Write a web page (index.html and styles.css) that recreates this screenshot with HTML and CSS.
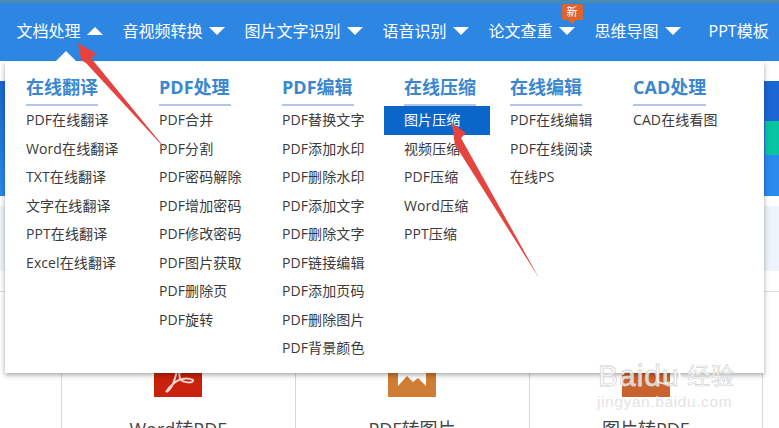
FILE: index.html
```html
<!DOCTYPE html>
<html>
<head>
    <meta charset="utf-8">
    <title>在线转换工具</title>
    <link rel="stylesheet" href="styles.css">
</head>
<body>
<div class="page">
    <div class="topStrip"></div>
    <ul class="nav">
        <li class="navItem">文档处理<i class="caret caretUp"></i></li>
        <li class="navItem">音视频转换<i class="caret"></i></li>
        <li class="navItem">图片文字识别<i class="caret"></i></li>
        <li class="navItem">语音识别<i class="caret"></i></li>
        <li class="navItem navNew">论文查重<i class="caret"></i><span class="newTag">新</span></li>
        <li class="navItem">思维导图<i class="caret"></i></li>
        <li class="navItem navLast">PPT模板</li>
    </ul>

    <div class="banner">
        <div class="bandBlue"></div>
        <div class="bandStack">
            <div class="band1"></div>
            <div class="band2"></div>
            <div class="band3"></div>
        </div>
    </div>
    <div class="lightBand"></div>

    <div class="cards">
        <div class="card">
            <div class="cardIcon iconRed">
                <svg width="48" height="44" viewBox="0 0 48 44"><path d="M12 39c5-2 9-12 11-22 0-4 1-6 2-5 2 2-2 10 2 15 3 3 11 3 12 1 1-2-6-3-11-2-6 1-13 8-16 13" fill="none" stroke="#f6d8d0" stroke-width="2"/></svg>
            </div>
            <div class="cardName">Word转PDF</div>
        </div>
        <div class="card">
            <div class="cardIcon iconOrange">
                <svg width="48" height="44" viewBox="0 0 48 44"><path d="M10 14h28v19H10z" fill="#fff"/><path d="M10 33l9-10 6 6 5-4 8 8z" fill="#cf7c35"/></svg>
            </div>
            <div class="cardName">PDF转图片</div>
        </div>
        <div class="card">
            <div class="cardIcon iconRust"></div>
            <div class="cardName">图片转PDF</div>
        </div>
    </div>

    <div class="menu">
        <span class="menuNotch"></span>
        <div class="menuCol">
            <h4>在线翻译</h4>
            <a>PDF在线翻译</a>
            <a>Word在线翻译</a>
            <a>TXT在线翻译</a>
            <a>文字在线翻译</a>
            <a>PPT在线翻译</a>
            <a>Excel在线翻译</a>
        </div>
        <div class="menuCol">
            <h4>PDF处理</h4>
            <a>PDF合并</a>
            <a>PDF分割</a>
            <a>PDF密码解除</a>
            <a>PDF增加密码</a>
            <a>PDF修改密码</a>
            <a>PDF图片获取</a>
            <a>PDF删除页</a>
            <a>PDF旋转</a>
        </div>
        <div class="menuCol">
            <h4>PDF编辑</h4>
            <a>PDF替换文字</a>
            <a>PDF添加水印</a>
            <a>PDF删除水印</a>
            <a>PDF添加文字</a>
            <a>PDF删除文字</a>
            <a>PDF链接编辑</a>
            <a>PDF添加页码</a>
            <a>PDF删除图片</a>
            <a>PDF背景颜色</a>
        </div>
        <div class="menuCol">
            <h4>在线压缩</h4>
            <a class="active">图片压缩</a>
            <a>视频压缩</a>
            <a>PDF压缩</a>
            <a>Word压缩</a>
            <a>PPT压缩</a>
        </div>
        <div class="menuCol">
            <h4>在线编辑</h4>
            <a>PDF在线编辑</a>
            <a>PDF在线阅读</a>
            <a>在线PS</a>
        </div>
        <div class="menuCol">
            <h4>CAD处理</h4>
            <a>CAD在线看图</a>
        </div>
    </div>

    <svg class="arrows" width="779" height="428" viewBox="0 0 779 428">
        <path d="M78 43L97 54 91 58 169 153 86 63 81 60z" fill="#e4433f"/>
        <path d="M452 123L466 133 461 138 539 278 454 143 455 146z" fill="#e4433f"/>
    </svg>

    <div class="watermark">
        <svg class="paw" width="42" height="42" viewBox="0 0 58 56">
            <g fill="none" stroke="#fff" stroke-width="2.5" opacity=".85">
                <ellipse cx="12" cy="25" rx="6" ry="8"/>
                <ellipse cx="24" cy="10" rx="6" ry="8"/>
                <ellipse cx="38" cy="11" rx="6" ry="8"/>
                <ellipse cx="49" cy="26" rx="6" ry="8"/>
                <path d="M30 27c9 0 16 10 16 18 0 8-10 8-16 6-6 2-16 2-16-6 0-8 7-18 16-18z"/>
            </g>
        </svg>
        <span class="wmBaidu">Baidu</span><span class="wmJy">经验</span>
        <span class="wmUrl">jingyan.baidu.com</span>
    </div>
</div>
</body>
</html>
```

FILE: styles.css
```css
*
{
    box-sizing: border-box;
}
html, body
{
    margin: 0;
    padding: 0;
}
body
{
    font-family: "Open Sans", "Noto Sans CJK SC", sans-serif;
    color: #333;
    background: #fff;
}
.page
{
    position: relative;
    width: 779px;
    height: 428px;
    overflow: hidden;
}
.topStrip
{
    height: 3px;
    background: #4b8ab0;
}

/* top nav */
.nav
{
    display: flex;
    height: 58px;
    margin: 0;
    padding: 0 0 0 16.5px;
    list-style: none;
    background: #2d87e2;
}
.navItem
{
    position: relative;
    display: flex;
    align-items: center;
    gap: 6px;
    height: 56px;
    margin-right: 20px;
    font-size: 16px;
    line-height: 56px;
    color: #fff;
    white-space: nowrap;
}
.navLast
{
    margin-left: 8px;
    margin-right: 0;
}
.caret
{
    width: 0;
    height: 0;
    border-left: 8px solid transparent;
    border-right: 8px solid transparent;
    border-top: 8px solid #fff;
}
.caretUp
{
    border-top: 0;
    border-bottom: 8px solid #fff;
}
.newTag
{
    position: absolute;
    top: 1px;
    right: -8px;
    width: 21px;
    height: 16px;
    border-radius: 2px;
    font-size: 11px;
    line-height: 16px;
    text-align: center;
    color: #fff;
    background: #e0642a;
}
.newTag:after
{
    content: "";
    position: absolute;
    left: 6px;
    top: 16px;
    border-left: 4px solid transparent;
    border-right: 4px solid transparent;
    border-top: 4px solid #e0642a;
}

/* what is left of the page under the menu */
.banner
{
    display: flex;
    height: 115px;
    margin-top: 20px;
}
.bandBlue
{
    width: 765px;
    background: linear-gradient(#1a66d2, #2a8aee);
}
.bandStack
{
    flex: 1;
    display: flex;
    flex-direction: column;
}
.band1
{
    height: 40px;
    background: #1a66d2;
}
.band2
{
    height: 34px;
    background: #08c4a2;
}
.band3
{
    flex: 1;
    background: #2a8aee;
}
.lightBand
{
    height: 65px;
    margin-top: 10px;
    margin-bottom: 20px;
    background: #eef4fb;
}
.cards
{
    display: flex;
    height: 137px;
    padding-left: 61px;
    border-top: 1px solid #ddd;
}
.card
{
    width: 234px;
    padding: 61px 1px 0 0;
    border-left: 1px solid #d8d8d8;
    text-align: center;
}
.card:last-child
{
    border-right: 1px solid #d8d8d8;
}
.cardIcon
{
    width: 48px;
    height: 44px;
    margin: 0 auto 20px;
    overflow: hidden;
}
.iconRed
{
    background: #c9210c;
}
.iconOrange
{
    background: #cf7c35;
}
.iconRust
{
    background: #c9622d;
}
.cardName
{
    font-size: 18px;
    line-height: 24px;
    color: #444;
}

/* dropdown */
.menu
{
    position: absolute;
    left: 5px;
    top: 62px;
    display: grid;
    grid-template-columns: 133px 123px 122px 106px 123px auto;
    align-items: start;
    width: 759px;
    height: 311px;
    padding: 0 0 0 1px;
    background: #fff;
    box-shadow: 0 2px 5px rgba(0, 0, 0, .35);
}
.menuNotch
{
    position: absolute;
    left: 50px;
    top: -11px;
    border-left: 11px solid transparent;
    border-right: 11px solid transparent;
    border-bottom: 11px solid #fff;
}
.menuCol
{
    padding-top: 12px;
}
.menuCol h4
{
    width: fit-content;
    min-width: 72px;
    height: 32px;
    margin: 0 20px;
    border-bottom: 2px solid #b4c6e6;
    font-size: 18px;
    line-height: 27px;
    font-weight: bold;
    color: #3a87d0;
}
.menuCol a
{
    display: block;
    height: 28.5px;
    padding: 0 20px;
    font-size: 14px;
    line-height: 27px;
    letter-spacing: .1px;
    color: #3a3a3a;
    white-space: nowrap;
}
.menuCol a.active
{
    color: #fff;
    background: #0a66c8;
}

.arrows
{
    position: absolute;
    left: 0;
    top: 0;
}

/* baidu watermark */
.watermark
{
    position: absolute;
    left: 597px;
    top: 345px;
    width: 150px;
    height: 75px;
    color: #fff;
}
.paw
{
    position: absolute;
    left: 50px;
    top: 0;
}
.wmBaidu
{
    position: absolute;
    left: 1px;
    top: 13px;
    font-family: "Liberation Sans", sans-serif;
    font-size: 30px;
    line-height: 36px;
    letter-spacing: 1px;
    -webkit-text-stroke: .8px #d4d4d4;
    color: rgba(255, 255, 255, .75);
}
.wmJy
{
    position: absolute;
    left: 90px;
    top: 16px;
    font-size: 23px;
    line-height: 28px;
    letter-spacing: 1px;
    -webkit-text-stroke: .6px #d0d0d0;
    color: #fff;
}
.wmUrl
{
    position: absolute;
    left: 0;
    top: 48px;
    font-family: "Liberation Sans", sans-serif;
    font-size: 15.5px;
    line-height: 18px;
    letter-spacing: .6px;
    color: #e4e4e4;
    white-space: nowrap;
}
```
